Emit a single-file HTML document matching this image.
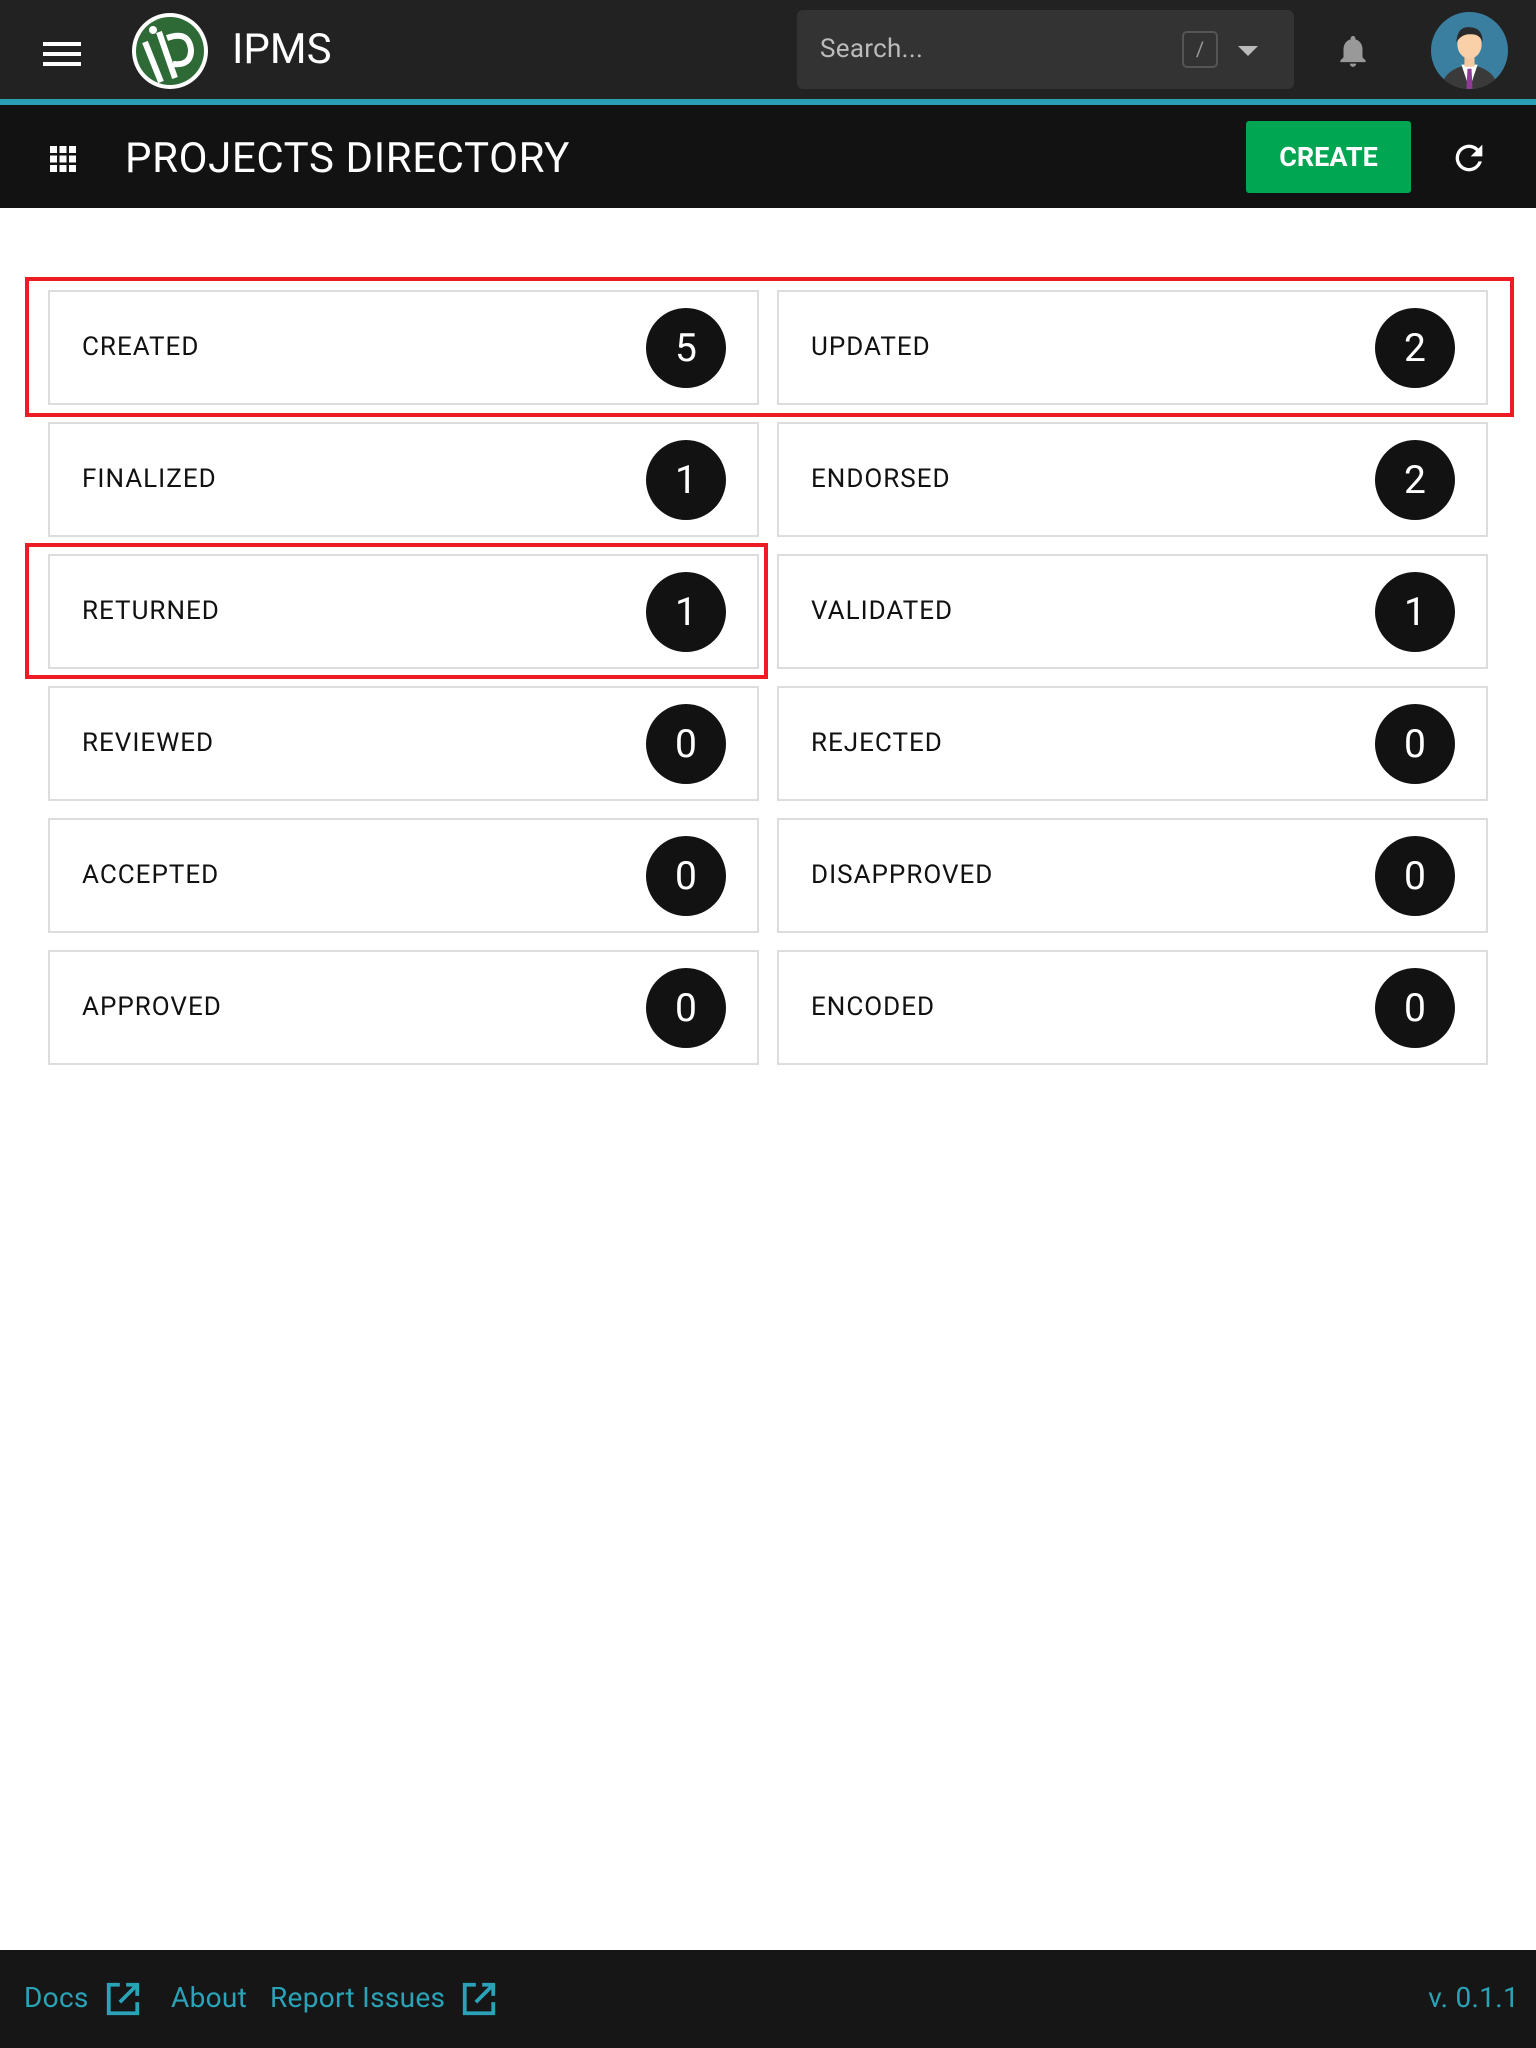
<!DOCTYPE html>
<html><head><meta charset="utf-8"><style>
*{margin:0;padding:0;box-sizing:border-box}
body{width:1536px;height:2048px;position:relative;background:#fff;font-family:"Roboto","Liberation Sans",sans-serif;overflow:hidden}
.abs{position:absolute}
.top{left:0;top:0;width:1536px;height:99px;background:#222}
.line{left:0;top:99px;width:1536px;height:6px;background:#2a9fb5}
.bar{left:0;top:105px;width:1536px;height:103px;background:#121212}
.card{position:absolute;width:711px;height:115px;border:2px solid #ddd;background:#fff}
.card span{position:absolute;left:32px;top:0;line-height:111px;font-size:26px;color:#111;letter-spacing:1px}
.card b{position:absolute;left:596px;top:16px;width:80px;height:80px;border-radius:50%;background:#121212;color:#fff;font-weight:normal;font-size:39px;text-align:center;line-height:80px}
.red{position:absolute;border:4px solid #ed1c24}
.foot{left:0;top:1950px;width:1536px;height:98px;background:#161616;color:#2aa3b8;font-size:28px;letter-spacing:0.3px}
.foot div{position:absolute;top:28px;line-height:40px}
</style></head><body>
<div class="abs top"></div>
<div class="abs line"></div>
<div class="abs bar"></div>
<div class="abs" style="left:43px;top:42px;width:38px;height:4px;background:#fff"></div>
<div class="abs" style="left:43px;top:52px;width:38px;height:4px;background:#fff"></div>
<div class="abs" style="left:43px;top:62px;width:38px;height:4px;background:#fff"></div>
<svg class="abs" style="left:131px;top:12px" width="78" height="78" viewBox="0 0 78 78"><circle cx="39" cy="39" r="38" fill="#fff"/><circle cx="39" cy="39" r="34" fill="#2d6a35"/><path d="M14 30 L30 70 M28 20 L44 66 M36 26 Q58 18 60 38 Q60 54 42 52" stroke="#fff" stroke-width="6" fill="none"/><circle cx="22" cy="18" r="4" fill="#fff"/></svg>
<div class="abs" style="left:232px;top:24px;font-size:42px;color:#fff;line-height:52px">IPMS</div>
<div class="abs" style="left:797px;top:10px;width:497px;height:79px;background:#333;border-radius:6px"></div>
<div class="abs" style="left:820px;top:32px;font-size:26px;color:#bbb;line-height:34px;letter-spacing:0.3px">Search...</div>
<div class="abs" style="left:1182px;top:31px;width:36px;height:37px;border:2px solid #555;border-radius:5px;color:#999;font-size:20px;text-align:center;line-height:33px">/</div>
<div class="abs" style="left:1238px;top:46px;width:0;height:0;border-left:10px solid transparent;border-right:10px solid transparent;border-top:10px solid #bbb"></div>
<svg class="abs" style="left:1334px;top:30px" width="38" height="42" viewBox="0 0 24 24"><path fill="#999" d="M12 22c1.1 0 2-.9 2-2h-4c0 1.1.9 2 2 2zm6-6v-5c0-3.070-1.64-5.64-4.5-6.32V4c0-.83-.67-1.5-1.5-1.5s-1.5.67-1.5 1.5v.68C7.63 5.36 6 7.92 6 11v5l-2 2v1h16v-1l-2-2z"/></svg>
<svg class="abs" style="left:1431px;top:12px" width="77" height="77" viewBox="0 0 76 76"><defs><clipPath id="c"><circle cx="38" cy="38" r="38"/></clipPath></defs><g clip-path="url(#c)"><rect width="76" height="76" fill="#3b7fa0"/><path d="M10 76 Q12 56 38 52 Q64 56 66 76Z" fill="#3a3a3a"/><path d="M30 52 L38 76 L46 52Z" fill="#fff"/><path d="M36 56 L40 56 L41 76 L35 76Z" fill="#8e3c96"/><rect x="33" y="42" width="10" height="12" fill="#f5c9a0"/><ellipse cx="38" cy="32" rx="12" ry="14" fill="#f9d0a8"/><path d="M25 30 Q26 14 38 15 Q51 15 51 30 Q48 21 38 22 Q30 22 25 30Z" fill="#2a2a2a"/></g></svg>
<svg class="abs" style="left:50px;top:146px" width="26" height="26" viewBox="0 0 26 26" fill="#fff"><rect x="0" y="0" width="7" height="7"/><rect x="9.5" y="0" width="7" height="7"/><rect x="19" y="0" width="7" height="7"/><rect x="0" y="9.5" width="7" height="7"/><rect x="9.5" y="9.5" width="7" height="7"/><rect x="19" y="9.5" width="7" height="7"/><rect x="0" y="19" width="7" height="7"/><rect x="9.5" y="19" width="7" height="7"/><rect x="19" y="19" width="7" height="7"/></svg>
<div class="abs" style="left:125px;top:134px;font-size:42px;color:#fff;line-height:50px;letter-spacing:0.6px">PROJECTS DIRECTORY</div>
<div class="abs" style="left:1246px;top:121px;width:165px;height:72px;background:#00a651;border-radius:3px;color:#fff;font-weight:bold;font-size:27px;text-align:center;line-height:72px">CREATE</div>
<svg class="abs" style="left:1449px;top:138px" width="40" height="40" viewBox="0 0 24 24"><path fill="#fff" d="M17.65 6.35A7.96 7.96 0 0 0 12 4a8 8 0 1 0 7.73 10h-2.08A6 6 0 1 1 12 6c1.66 0 3.14.69 4.22 1.78L13 11h7V4l-2.35 2.35z"/></svg>
<div class="card" style="left:48px;top:290px"><span>CREATED</span><b>5</b></div>
<div class="card" style="left:777px;top:290px"><span>UPDATED</span><b>2</b></div>
<div class="card" style="left:48px;top:422px"><span>FINALIZED</span><b>1</b></div>
<div class="card" style="left:777px;top:422px"><span>ENDORSED</span><b>2</b></div>
<div class="card" style="left:48px;top:554px"><span>RETURNED</span><b>1</b></div>
<div class="card" style="left:777px;top:554px"><span>VALIDATED</span><b>1</b></div>
<div class="card" style="left:48px;top:686px"><span>REVIEWED</span><b>0</b></div>
<div class="card" style="left:777px;top:686px"><span>REJECTED</span><b>0</b></div>
<div class="card" style="left:48px;top:818px"><span>ACCEPTED</span><b>0</b></div>
<div class="card" style="left:777px;top:818px"><span>DISAPPROVED</span><b>0</b></div>
<div class="card" style="left:48px;top:950px"><span>APPROVED</span><b>0</b></div>
<div class="card" style="left:777px;top:950px"><span>ENCODED</span><b>0</b></div>
<div class="red" style="left:25px;top:277px;width:1489px;height:140px"></div>
<div class="red" style="left:25px;top:543px;width:743px;height:136px"></div>
<div class="abs foot">
<div style="left:24px">Docs</div>
<svg style="position:absolute;left:104px;top:30px" width="38" height="38" viewBox="0 0 24 24"><path fill="none" stroke="#2aa3b8" stroke-width="2.4" d="M10 3H3v18h18v-7M14 3h7v7M21 3L10 14"/></svg>
<div style="left:171px">About</div>
<div style="left:270px">Report Issues</div>
<svg style="position:absolute;left:460px;top:30px" width="38" height="38" viewBox="0 0 24 24"><path fill="none" stroke="#2aa3b8" stroke-width="2.4" d="M10 3H3v18h18v-7M14 3h7v7M21 3L10 14"/></svg>
<div style="right:17px">v. 0.1.1</div>
</div>
</body></html>
